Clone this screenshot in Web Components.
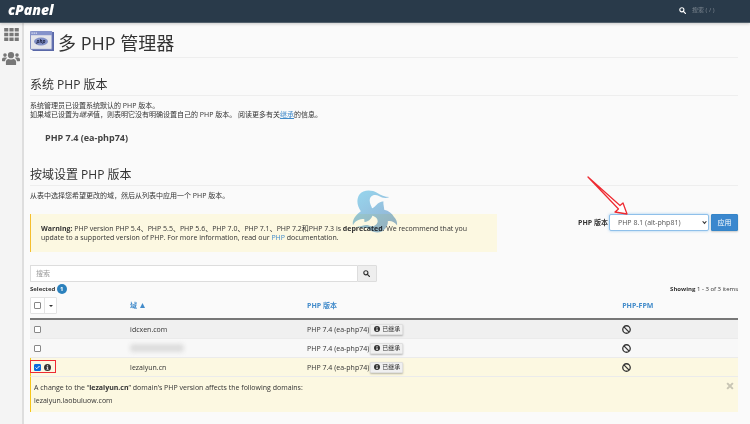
<!DOCTYPE html>
<html lang="zh-CN">
<head>
<meta charset="utf-8">
<title>多 PHP 管理器</title>
<style>
  body {
    margin: 0;
    min-height: 100vh;
    background: #fafafa;
    color: #333;
    font: 7px/9px "Open Sans", "Noto Sans CJK SC", sans-serif;
    --link: #428bca;
    --line: #eee;
    --dark: #293a4a;
  }
</style>
</head>
<body>
<cp-app></cp-app>

<script>
const define = (name, html, setup) => {
  const template = document.createElement('template');
  template.innerHTML = `<style>*{box-sizing:border-box}button,input,select{font:inherit;color:inherit;margin:0}a{color:var(--link)}</style>${html}`;
  customElements.define(name, class extends HTMLElement {
    constructor() {
      super();
      this.attachShadow({ mode: 'open' }).append(template.content.cloneNode(true));
    }
    connectedCallback() { if (setup) setup(this, this.shadowRoot); }
  });
};

const icons = {
  search: ['0 0 16 16', '<circle cx="6.5" cy="6.5" r="4.7" fill="none" stroke="currentColor" stroke-width="2.6"/><path d="M10 10l4.6 4.6" stroke="currentColor" stroke-width="3" stroke-linecap="round"/>'],
  grid: ['0 0 15 13', '<path fill="currentColor" d="M.2 0h4.1v3.6H.2zM5.400 0h4.200v3.600H5.400zM10.700 0h4.100v3.600h-4.100zM.2 4.700h4.100v3.600H.2zM5.400 4.700h4.200v3.600H5.400zM10.700 4.700h4.100v3.600h-4.100zM.2 9.400h4.100V13H.2zM5.400 9.400h4.200V13H5.400zM10.700 9.400h4.100V13h-4.100z"/>'],
  users: ['0 0 18 13', '<g fill="currentColor"><circle cx="9" cy="3.2" r="3.1"/><circle cx="3" cy="3.1" r="1.8"/><circle cx="15" cy="3.1" r="1.8"/><path d="M3.900 12.400V10c0-2 1.300-3.100 3-3.100 1.400.8 2.800.8 4.200 0 1.700 0 3 1.100 3 3.100v2.400c0 .4-.3.6-.7.6H4.600c-.4 0-.7-.2-.7-.6zM0 8.700V7.500C0 6.300.8 5.500 2 5.500h2c.5 0 .9.1 1.200.4C3.900 6.600 3.200 7.700 3.100 9.200H.6C.2 9.200 0 9 0 8.700zM18 8.700V7.500c0-1.200-.8-2-2-2h-2c-.5 0-.9.1-1.200.4 1.300.7 2 1.800 2.100 3.300h2.500c.4 0 .6-.2.6-.5z"/></g>'],
  info: ['0 0 16 16', '<circle cx="8" cy="8" r="8" fill="currentColor"/><path d="M6.700 2.800h2.800v2.500H6.700zM5.800 6.500h3.700v4.900h1v1.700H5.700v-1.700h1V8.200h-.9z" fill="#ddd"/>'],
  ban: ['0 0 18 18', '<circle cx="9" cy="9" r="7.500" fill="none" stroke="currentColor" stroke-width="2.600"/><path d="M3.800 3.800l10.400 10.400" stroke="currentColor" stroke-width="2.600"/>'],
  close: ['0 0 14 14', '<path d="M2 2l10 10M12 2L2 12" stroke="currentColor" stroke-width="3.600"/>'],
  up: ['0 0 10 10', '<path d="M5 0l5 10H0z" fill="currentColor"/>'],
  caret: ['0 0 8 4', '<path d="M0 0h8L4 4z" fill="currentColor"/>']
};
define('cp-icon', `<style>:host{display:inline-flex;flex:none;width:var(--w,8px);height:var(--h,var(--w,8px))}svg{width:100%;height:100%;display:block}</style><svg aria-hidden="true"></svg>`,
  (host, root) => {
    const svg = root.querySelector('svg'), [box, art] = icons[host.getAttribute('name')];
    svg.setAttribute('viewBox', box);
    svg.innerHTML = art;
  });

define('cp-header', `<style>
  :host{display:flex;align-items:center;justify-content:space-between;height:23px;padding:0 24px 0 8px;background:var(--dark);border-bottom:1px solid #52606c;box-shadow:0 1px 3px #0003;position:relative;box-sizing:border-box}
  .logo{color:#fff;text-decoration:none;font:italic 800 14px/18px "Open Sans",sans-serif;padding-bottom:2px}
  label{display:flex;align-items:center;gap:6px;color:#fff;padding-bottom:2px}
  input{appearance:none;width:34px;padding:0;border:0;background:none;outline:0;line-height:9px;height:10px;font-size:6px}
  input::placeholder{color:#7d8791;opacity:1}
  cp-icon{--w:7px}
</style>
<a class="logo" href="#" aria-label="cPanel">cPanel</a>
<label><cp-icon name="search"></cp-icon><input type="text" aria-label="搜索" placeholder="搜索 ( / )"></label>`);

define('cp-sidebar', `<style>
  :host{display:block;width:24px;flex:none;background:#f4f4f4;border-right:2px solid #dedede;box-sizing:border-box}
  nav{display:flex;flex-direction:column;align-items:center;gap:11px;padding-top:5px;color:#777}
  a{color:inherit;display:flex}
  .grid{--w:15px;--h:13px}.users{--w:18px;--h:13px}
</style>
<nav><a href="#" aria-label="Tools"><cp-icon class="grid" name="grid"></cp-icon></a><a href="#" aria-label="Users"><cp-icon class="users" name="users"></cp-icon></a></nav>`);

define('cp-title', `<style>
  :host{display:block}
  h1{display:flex;align-items:center;gap:4px;margin:0;font-weight:400;font-size:18px;line-height:28px;border-bottom:1px solid var(--line)}
  svg{width:24px;height:20px;margin-bottom:4px}
</style>
<h1><svg viewBox="0 0 24 20" aria-hidden="true">
  <path d="M2 1h22v19H3l-2-2z" fill="#5a68a8"/><rect x=".4" y=".4" width="21.600" height="18" rx="1" fill="#e4e5ea" stroke="#6d7cba" stroke-width=".9"/>
  <path d="M.4.400h21.600v3.800H.4z" fill="#8593cb"/><path d="M1.500 1.500h1.200v1.200H1.500zM3.600 1.500h1.200v1.200H3.600zM5.700 1.500h1.200v1.200H5.700z" fill="#e8ebf7"/>
  <ellipse cx="11" cy="10.500" rx="7" ry="4" fill="#8190c6"/>
  <text x="11" y="12" text-anchor="middle" font-size="5" font-weight="700" font-style="italic" fill="#1c2140">php</text>
</svg><span><slot></slot></span></h1>`);

define('cp-section', `<style>
  :host{display:block}
  h2{margin:0 0 5px;padding-top:1px;font-weight:400;font-size:12px;line-height:21px;border-bottom:1px solid var(--line)}
</style><h2><slot name="heading"></slot></h2><slot></slot>`);

define('cp-alert', `<style>
  :host{display:block;padding:10px 12px 10px 10px;background:#fcf8e1;border-left:1px solid #f5be2e;box-sizing:border-box}
</style><slot></slot>`);

define('cp-version-form', `<style>
  :host{display:block}
  form{display:flex;align-items:center;gap:1px}
  label{font-weight:700}
  .box{position:relative;display:flex;margin-right:1px}
  select{appearance:none;width:100px;height:17px;padding:0 8px;border:1px solid #8fc0ea;border-radius:2px;background:#fff;color:#555;outline:0;box-shadow:0 0 3px #66afe999}
  svg{position:absolute;right:2px;top:6px;width:5px;height:5px;pointer-events:none}
  button{width:27px;height:17px;padding:0;border:1px solid #3585c8;border-radius:1px;background:#3a87ce;color:#fff;box-shadow:0 1px 2px #0003}
</style>
<form><label for="v">PHP 版本</label><span class="box"><select id="v"><option>PHP 8.1 (alt-php81)</option><option>PHP 7.4 (ea-php74)</option></select><svg viewBox="0 0 8 8" aria-hidden="true"><path d="M1 2l3 3.500L7 2" fill="none" stroke="#333" stroke-width="1.800"/></svg></span><button type="button">应用</button></form>`);

define('cp-search', `<style>
  :host{display:flex;width:49%;height:17px}
  input{flex:1;min-width:0;padding:0 5px;border:1px solid #ddd;border-right:0;background:#fff;border-radius:1px 0 0 1px}
  input::placeholder{color:#999;opacity:1}
  button{width:20px;padding:0;display:flex;align-items:center;justify-content:center;border:1px solid #ddd;background:#eee;border-radius:0 1px 1px 0;--w:7px}
</style><input type="text" aria-label="搜索" placeholder="搜索"><button type="button" aria-label="搜索"><cp-icon name="search"></cp-icon></button>`);

define('cp-inherited', `<style>
  :host{display:inline-flex;vertical-align:middle}
  button{display:flex;align-items:center;gap:2px;height:11px;padding:0 2px 0 3px;border:1px solid #e0e0e0;border-radius:1px;background:#f0f0f0;box-shadow:0 1px 2px #0004;line-height:9px;font-size:6px;--w:6px}
</style><button type="button"><cp-icon name="info"></cp-icon>已继承</button>`);

define('cp-domain-table', `<style>
  :host{display:block}
  table{width:100%;border-collapse:separate;border-spacing:0;table-layout:fixed}
  th,td{padding:0 0 0 1px;text-align:left;vertical-align:middle}
  th{height:23px;padding-bottom:4px;border-bottom:2px solid #777}
  th a{text-decoration:none;display:inline-flex;align-items:center;gap:3px;--w:5px}
  td{height:19px;border-bottom:1px solid #ebebeb}
  .pick{width:14%;padding-left:0}.dom{width:25%}.ver{width:44.500%}
  .odd td{background:#f0f0f0}.even td{background:#f8f8f8}
  .sel td{background:#fcf8e1}.sel .pick,.note td{border-left:1px solid #f5c518}
  .note td{background:#fcf8e1;border-bottom:0;height:35px;vertical-align:top;padding:0}
  .pick div{display:flex;align-items:center;gap:3px;padding-left:4px;--w:7px}
  .sel .pick div{padding-left:3px}
  input{appearance:none;width:7px;height:7px;border:1px solid #888;border-radius:1px;background:#fff;display:block}
  input:checked{border-color:#0b6bdc;background:#0b6bdc url("data:image/svg+xml,%3Csvg xmlns='http://www.w3.org/2000/svg' viewBox='0 0 10 10'%3E%3Cpath d='M1 5l2.500 2.500L9 2' fill='none' stroke='white' stroke-width='2'/%3E%3C/svg%3E") center/100%}
  th .group{display:inline-flex;padding:0;gap:0;height:17px;border:1px solid #e3e3e3;background:#fff;border-radius:1px}
  .group label{padding:0 3px}
  .group button{width:12px;height:15px;padding:0;border:0;border-left:1px solid #e3e3e3;background:none;display:flex;align-items:center;justify-content:center;--w:4px;--h:2px}
  .ver div{display:flex;align-items:center;gap:1px}
  .ban{display:flex;--w:9px}
  .hidden{display:block;width:54px;height:8px;background:#ddd;border-radius:3px;filter:blur(2px)}
  .msg{display:flex;justify-content:space-between;padding:4px 4px 0 3px;line-height:13px;--w:8px}
  .msg p{margin:0}
  .msg button{border:0;background:none;padding:1px 0 0;height:10px;color:#c8c5b4;display:flex}
  .mark{position:relative}
  .mark::after{content:"";position:absolute;left:-1px;top:2px;width:26px;height:13px;border:1px solid #ee2b32;box-sizing:border-box;pointer-events:none}
</style>
<table>
  <thead><tr>
    <th class="pick"><div class="group"><label><input type="checkbox" aria-label="Select all"></label><button type="button" aria-label="Select options"><cp-icon name="caret"></cp-icon></button></div></th>
    <th class="dom"><a href="#">域<cp-icon name="up"></cp-icon></a></th>
    <th class="ver"><a href="#">PHP 版本</a></th>
    <th><a href="#">PHP-FPM</a></th>
  </tr></thead>
  <tbody>
    <tr class="odd"><td class="pick"><div><input type="checkbox" aria-label="idcxen.com"></div></td><td>idcxen.com</td><td class="ver"><div>PHP 7.4 (ea-php74)<cp-inherited></cp-inherited></div></td><td><cp-icon class="ban" name="ban"></cp-icon></td></tr>
    <tr class="even"><td class="pick"><div><input type="checkbox" aria-label="Domain"></div></td><td><span class="hidden"></span></td><td class="ver"><div>PHP 7.4 (ea-php74)<cp-inherited></cp-inherited></div></td><td><cp-icon class="ban" name="ban"></cp-icon></td></tr>
    <tr class="sel"><td class="pick mark"><div><input type="checkbox" checked aria-label="lezaiyun.cn"><cp-icon name="info"></cp-icon></div></td><td>lezaiyun.cn</td><td class="ver"><div>PHP 7.4 (ea-php74)<cp-inherited></cp-inherited></div></td><td><cp-icon class="ban" name="ban"></cp-icon></td></tr>
    <tr class="note"><td colspan="4"><div class="msg"><div><p>A change to the “<b>lezaiyun.cn</b>” domain’s PHP version affects the following domains:</p><p>lezaiyun.laobuluow.com</p></div><button type="button" aria-label="Close"><cp-icon name="close"></cp-icon></button></div></td></tr>
  </tbody>
</table>`);

define('cp-watermark', `<style>:host{display:block;pointer-events:none;mix-blend-mode:multiply}svg{display:block;width:100%;height:100%}</style>
<svg viewBox="0 0 140 128" preserveAspectRatio="none" aria-hidden="true"><defs><linearGradient id="g" x1="0" y1="0" x2=".7" y2="1"><stop offset="0" stop-color="#88d6f2"/><stop offset="1" stop-color="#84a9d3"/></linearGradient></defs>
<path fill="url(#g)" opacity=".85" d="M114 21C101 27 92 23 82 18C69 11 55 17 54 29C53 39 59 47 61 54C68 54 72 45 81 39C87 35 92 34 96 34C94 42 98 49 98 59C112 62 122 70 128 80C136 88 138 96 137 105C128 94 118 91 109 93C111 105 98 124 84 126C64 128 54 119 48 114C39 110 24 116 16 108C29 110 39 101 49 105C63 111 75 106 78 95C79 84 70 79 62 77C59 87 48 96 38 95C37 92 38 88 37 86C23 86 8 91 3 105C-1 89 12 73 27 63C15 48 13 28 22 14C34-2 60-1 76 8C88 16 99 20 114 21Z"/></svg>`);

define('cp-arrow', `<style>:host{display:block;pointer-events:none}svg{display:block;width:100%;height:100%}</style>
<svg viewBox="0 0 42 39" aria-hidden="true"><path d="M1 1L33 29.500L36 27L40 38L28 36L31.500 33Z" fill="#fff" stroke="#ee2b32" stroke-width="1.300" stroke-linejoin="round"/></svg>`);

define('cp-app', `<style>
  :host{display:flex;flex-direction:column;min-height:100vh}
  .body{display:flex;flex:1}
  main{flex:1;min-width:0;padding:6px 12px 12px 6px;position:relative}
  p{margin:0}
  .first{margin-top:15px}.second{margin-top:19px}
  .current{margin-top:13px;padding-left:15px;font-size:9px;line-height:12px;font-weight:700;color:#444}
  .tools{display:flex;justify-content:space-between;align-items:flex-start;margin-top:14px;position:relative}
  cp-alert{width:66%}
  cp-alert a{text-decoration:none}
  cp-search{margin-top:13px}
  .status{display:flex;justify-content:space-between;line-height:10px;margin:2px 0 3px;font-size:6px}
  .badge{display:inline-block;min-width:10px;text-align:center;background:#2b81bd;color:#fff;border-radius:5px;font-weight:700}
  cp-watermark{position:absolute;left:322px;top:-24px;width:46px;height:43px}
  cp-arrow{position:absolute;right:109px;top:-38px;width:42px;height:39px}
</style>
<cp-header></cp-header>
<div class="body">
  <cp-sidebar></cp-sidebar>
  <main>
    <cp-title>多 PHP 管理器</cp-title>
    <cp-section class="first"><span slot="heading">系统 PHP 版本</span>
      <p>系统管理员已设置系统默认的 PHP 版本。</p>
      <p>如果域已设置为<i>继承</i>值，则表明它没有明确设置自己的 PHP 版本。 阅读更多有关<a href="#">继承</a>的信息。</p>
      <p class="current">PHP 7.4 (ea-php74)</p>
    </cp-section>
    <cp-section class="second"><span slot="heading">按域设置 PHP 版本</span>
      <p>从表中选择您希望更改的域，然后从列表中应用一个 PHP 版本。</p>
      <div class="tools">
        <cp-alert><b>Warning:</b> PHP version PHP 5.4、PHP 5.5、PHP 5.6、PHP 7.0、PHP 7.1、PHP 7.2和PHP 7.3 is <b>deprecated</b>. We recommend that you update to a supported version of PHP. For more information, read our <a href="#">PHP</a> documentation.</cp-alert>
        <cp-version-form></cp-version-form>
        <cp-watermark></cp-watermark>
        <cp-arrow></cp-arrow>
      </div>
      <cp-search></cp-search>
      <div class="status"><span><b>Selected</b> <span class="badge">1</span></span><span><b>Showing</b> 1 - 3 of 3 items</span></div>
      <cp-domain-table></cp-domain-table>
    </cp-section>
  </main>
</div>`);
</script>
</body>
</html>
